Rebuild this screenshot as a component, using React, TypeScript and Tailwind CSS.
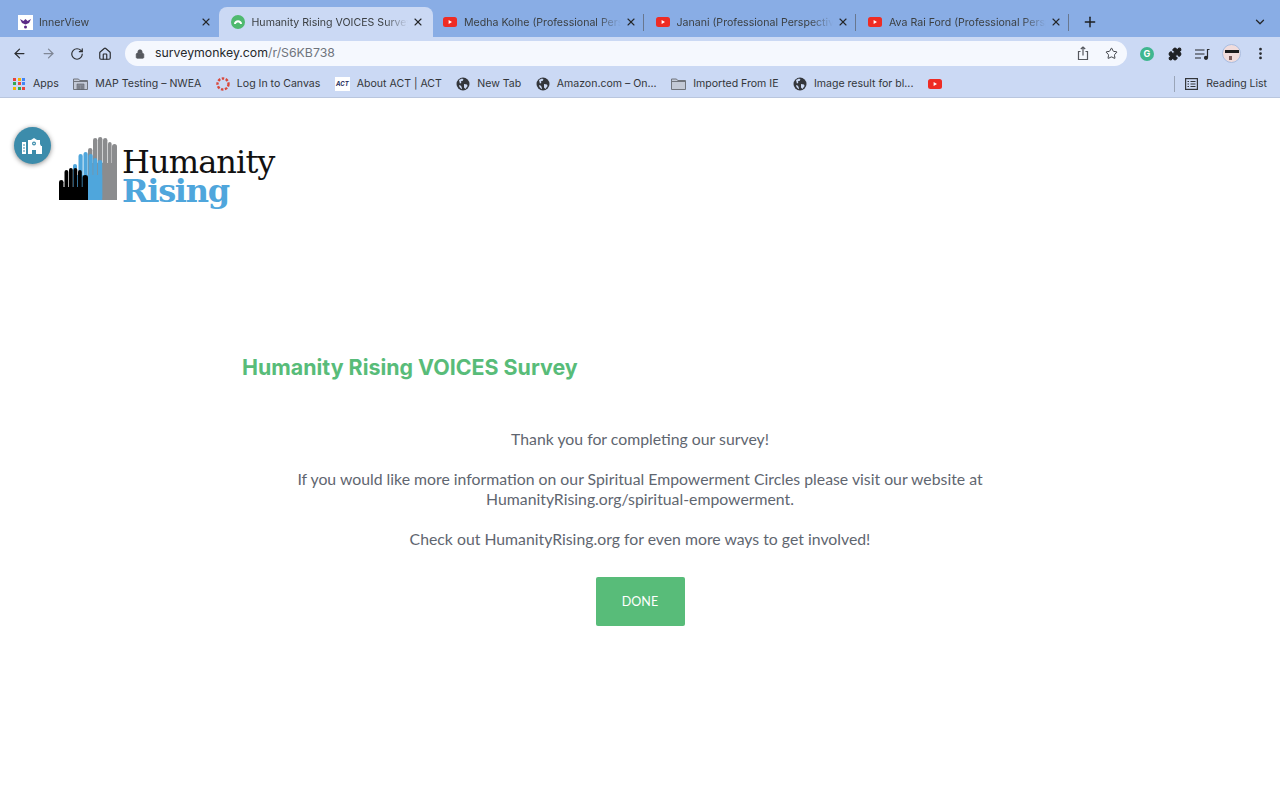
import { Plus, ChevronDown, ArrowLeft, ArrowRight, RotateCw, Home, Lock, Star, Puzzle, EllipsisVertical, X } from 'lucide-react';

const SANS = "font-['Inter','Liberation_Sans',sans-serif]";

function YouTube() {
  return (
    <svg width="14" height="10" viewBox="0 0 14 10" className="shrink-0">
      <rect width="14" height="10" rx="2.5" fill="#ee2c24" />
      <path d="M5.6 3v4l3.4-2z" fill="#fff" />
    </svg>
  );
}

function Globe() {
  return (
    <svg width="14" height="14" viewBox="0 0 14 14" className="shrink-0">
      <circle cx="7" cy="7" r="6.5" fill="#33363b" />
      <path d="M3 3l3-1.6 1.5 1-1 1.5-1.6.4.4 1.6-1.4.6zM8 7l3 .4.6 1.6-2.2 3L8 10.500zM3 8l2 .8 1 2.500-.4 1L3.500 10z" fill="#cbd9f4" />
    </svg>
  );
}

function Folder({ building }: { building?: boolean }) {
  return (
    <svg width="15" height="12" viewBox="0 0 15 12" className="shrink-0">
      <path d="M.5 1h5l1.200 1.500h7.800V11.500H.5z" fill="#c3c9d6" stroke="#70747c" />
      <path d="M.5 3.500h14" stroke="#70747c" />
      {building && <path d="M4 6h7v5.500H4zM6 7.500v4M9 7.500v4" fill="#8a8f99" stroke="#5c6068" strokeWidth=".6" />}
    </svg>
  );
}

function Tab({ icon, title, separator, active, afterActive }: { icon: React.ReactNode; title: string; separator?: boolean; active?: boolean; afterActive?: boolean }) {
  const size = active ? 'w-[214px] pl-[12px] pr-[8.500px] rounded-t-[8px] bg-[#cbd9f4]' : afterActive ? 'w-[211px] pl-[10.500px] pr-[7px]' : 'w-[212.500px] pl-[12px] pr-[7px]';
  return (
    <div className={`relative flex h-[30px] shrink-0 items-center ${size}`}>
      {icon}
      <span className="ml-[7px] min-w-0 flex-1 overflow-hidden whitespace-nowrap pt-[1px] text-[10.600px] leading-[14px] text-[#3c4043] [mask-image:linear-gradient(to_right,black_85%,transparent)]">
        {title}
      </span>
      <X size={12} strokeWidth={2.200} className="ml-[4px] shrink-0 text-[#25272a]" />
      {separator && <span className="absolute right-0 top-[7px] h-[17px] w-px bg-[#68778f]" />}
    </div>
  );
}

function Bookmark({ icon, label }: { icon: React.ReactNode; label: string }) {
  return (
    <div className="flex items-center gap-[7px] whitespace-nowrap text-[10.550px] text-[#33363a]">
      {icon}
      <span>{label}</span>
    </div>
  );
}

function AppsIcon() {
  const colors = ['#e8453c', '#f4b400', '#4285f4', '#34a853', '#e8453c', '#4285f4', '#f4b400', '#34a853', '#e8453c'];
  return (
    <div className="mr-[1px] grid grid-cols-3 gap-[1.500px]">
      {colors.map((c, i) => (
        <span key={i} className="h-[3px] w-[3px]" style={{ backgroundColor: c }} />
      ))}
    </div>
  );
}

const GREY_FINGERS = [[29, 11, 4.4], [34, 1, 4.4], [39, 0, 4.4], [44, 1, 4.4], [49, 5, 3.6], [53, 7, 5]];
const BLUE_FINGERS = [[14, 27, 4], [19.500, 17, 4.200], [24.500, 15, 4.200], [29.500, 17, 4.200], [34.200, 21, 4], [38.800, 23, 4.400]];
const BLACK_FINGERS = [[0, 43, 4.500], [5.500, 33, 3.800], [10, 31, 3.800], [14.500, 31, 3.800], [19, 33, 3.800], [23.500, 38, 5.500]];

function Hand({ fingers, x, palmTop, width, color }: { fingers: number[][]; x: number; palmTop: number; width: number; color: string }) {
  return (
    <g fill={color}>
      {fingers.map(([fx, fy, fw]) => (
        <rect key={fx} x={fx} y={fy} width={fw} height={63 - fy} rx={fw / 2} />
      ))}
      <rect x={x} y={palmTop} width={width} height={63 - palmTop} />
    </g>
  );
}

function HandsLogo() {
  return (
    <svg width="58" height="64" viewBox="0 0 58 64" className="shrink-0">
      <Hand fingers={GREY_FINGERS} x={29} palmTop={26} width={29} color="#8b8c8e" />
      <Hand fingers={BLUE_FINGERS} x={14} palmTop={38} width={29.200} color="#4fa6dc" />
      <Hand fingers={BLACK_FINGERS} x={0} palmTop={50} width={29} color="#000" />
    </svg>
  );
}

export default function App() {
  return (
    <div className={`flex h-[800px] w-[1280px] flex-col overflow-hidden bg-white ${SANS}`}>
      {/* tab strip */}
      <div className="flex h-[37px] items-end bg-[#89ade5] pl-[6px]">
        <Tab
          title="InnerView"
          icon={
            <svg width="15" height="15" viewBox="0 0 15 15" className="mr-[-1px] shrink-0">
              <rect width="15" height="15" fill="#fff" />
              <path d="M2 4l3.500 2L7.500 4l2 2L13 4l-2 4-3.500 1.500L4 8z" fill="#5b2a86" />
              <circle cx="7.500" cy="12" r="1.500" fill="#5b2a86" />
            </svg>
          }
        />
        <Tab
          active
          title="Humanity Rising VOICES Survey"
          icon={
            <svg width="14" height="14" viewBox="0 0 14 14" className="shrink-0">
              <circle cx="7" cy="7" r="7" fill="#4fb96f" />
              <path d="M3 9c0-5 8-5 8 0H9c0-2-4-2-4 0z" fill="#fff" />
            </svg>
          }
        />
        <Tab afterActive icon={<YouTube />} title="Medha Kolhe (Professional Perspective)" separator />
        <Tab icon={<YouTube />} title="Janani (Professional Perspective)" separator />
        <Tab icon={<YouTube />} title="Ava Rai Ford (Professional Perspective)" separator />
        <Plus size={16} strokeWidth={2.200} className="mb-[7px] ml-[13px] text-[#1d1f22]" />
        <ChevronDown size={14} strokeWidth={2.200} className="mb-[8px] ml-auto mr-[13px] text-[#25272a]" />
      </div>

      {/* toolbar */}
      <div className="flex h-[33px] items-center bg-[#cbd9f4]">
        <div className="ml-[12px] flex items-center gap-[14px]">
          <ArrowLeft size={15} className="text-[#2b2d30]" />
          <ArrowRight size={15} className="text-[#7f8796]" />
          <RotateCw size={14} className="text-[#2b2d30]" />
          <Home size={14} className="text-[#2b2d30]" />
        </div>
        <div className="ml-[13px] flex h-[25px] w-[1002px] items-center rounded-full bg-[#f5f8fe] pl-[10px] pr-[9px]">
          <Lock size={10} fill="#55585e" className="text-[#55585e]" />
          <span className="ml-[10px] text-[12.300px] text-[#26282b]">
            surveymonkey.com<span className="text-[#6f747c]">/r/S6KB738</span>
          </span>
          <svg width="14" height="15" viewBox="0 0 14 15" fill="none" stroke="#55585e" strokeWidth="1.200" className="ml-auto">
            <path d="M4.500 5.500H2.500v8h9v-8h-2M7 9.500V1M4.800 3L7 1l2.200 2" />
          </svg>
          <Star size={13} strokeWidth={1.800} className="ml-[15px] text-[#3b3e43]" />
        </div>
        <div className="ml-[13px] flex h-[14px] w-[14px] items-center justify-center rounded-full bg-[#3fb68f] text-[9px] font-bold leading-none text-white">G</div>
        <Puzzle size={14} fill="#1f2124" className="ml-[14px] text-[#1f2124]" />
        <svg width="15" height="12" viewBox="0 0 15 12" fill="none" stroke="#26282b" strokeWidth="1.200" className="ml-[13px]">
          <path d="M0 2h9.500M0 6h9.500M0 10h6" />
          <path d="M12.500 9.500V1.500h2" />
          <circle cx="11" cy="9.800" r="1.500" fill="#26282b" />
        </svg>
        <div className="relative ml-[12px] h-[19px] w-[19px] overflow-hidden rounded-full border border-[#a9bde0] bg-[#f0dcdc]">
          <span className="absolute left-[2px] top-[5px] h-[3px] w-[14px] bg-[#1c1c1c]" />
          <span className="absolute left-[6px] top-[11px] h-[4px] w-[3px] bg-[#7a5a5a]" />
        </div>
        <EllipsisVertical size={15} strokeWidth={2.400} className="ml-[12px] text-[#26282b]" />
      </div>

      {/* bookmarks bar */}
      <div className="flex h-[28px] items-center gap-[14.500px] border-b border-[#b9c6de] bg-[#cbd9f4] pl-[13px]">
        <Bookmark icon={<AppsIcon />} label="Apps" />
        <Bookmark icon={<Folder building />} label="MAP Testing – NWEA" />
        <Bookmark
          icon={
            <svg width="14" height="14" viewBox="0 0 14 14" className="shrink-0">
              <circle cx="7" cy="7" r="5.500" fill="none" stroke="#d8483c" strokeWidth="2.400" strokeDasharray="2.500 1.500" />
            </svg>
          }
          label="Log In to Canvas"
        />
        <Bookmark
          icon={<span className="flex h-[14px] w-[15px] items-center justify-center bg-white text-[6px] font-bold italic leading-none text-[#1c2a5a]">ACT</span>}
          label="About ACT | ACT"
        />
        <Bookmark icon={<Globe />} label="New Tab" />
        <Bookmark icon={<Globe />} label="Amazon.com – On..." />
        <Bookmark icon={<Folder />} label="Imported From IE" />
        <Bookmark icon={<Globe />} label="Image result for bl..." />
        <YouTube />
        <div className="ml-auto flex h-full items-center pr-[13px]">
          <span className="h-[16px] w-px bg-[#9aa5b8]" />
          <svg width="13" height="12" viewBox="0 0 13 12" fill="none" stroke="#33363a" strokeWidth="1.200" className="ml-[10px]">
            <rect x=".6" y=".6" width="11.800" height="10.800" />
            <path d="M2.500 3.500h1.500M5.500 3.500h5M2.500 6h1.500M5.500 6h5M2.500 8.500h1.500M5.500 8.500h5" />
          </svg>
          <span className="ml-[8px] whitespace-nowrap text-[10.500px] text-[#33363a]">Reading List</span>
        </div>
      </div>

      {/* page */}
      <main className="relative flex-1 bg-white">
        <button
          type="button"
          aria-label="Accessibility"
          className="absolute left-[14px] top-[29px] flex h-[37px] w-[37px] items-center justify-center rounded-full bg-[#3c8cab] shadow-[0_1px_5px_rgba(0,0,0,0.45)]"
        >
          <svg width="22" height="18" viewBox="0 0 22 18" fill="#fff">
            <path d="M6 7V3h3l3-2 3 2h3v4l1 2h1v8h-6v-4h-4v4H6z" />
            <circle cx="12" cy="6.500" r="2" fill="#3c8cab" />
            <circle cx="12" cy="6.500" r=".8" />
            <path d="M0 5h4v12H0z" />
            <path d="M1 8h2M1 11h2M1 14h2" stroke="#3c8cab" />
          </svg>
        </button>

        <header className="flex items-start pl-[59px] pt-[39px]">
          <HandsLogo />
          <div className="ml-[5px] mt-[12px] flex flex-col">
            <span className="font-['DejaVu_Serif',serif] text-[32px] leading-[27px] tracking-[-0.900px] text-[#111]">Humanity</span>
            <span className="font-['DejaVu_Serif',serif] text-[32px] font-bold leading-[30px] tracking-[-1.300px] text-[#4fa6dc]">Rising</span>
          </div>
        </header>

        <div className="mx-auto mt-[145px] w-[796px]">
          <h1 className="text-[21.400px] font-bold leading-[32px] text-[#58bc79]">Humanity Rising VOICES Survey</h1>
          <div className="mt-[46px] flex flex-col items-center text-center font-['Lato',sans-serif] text-[15.800px] leading-[20px] text-[#5f6670]">
            <p>Thank you for completing our survey!</p>
            <p className="mt-[20px]">
              If you would like more information on our Spiritual Empowerment Circles please visit our website at
              <br />
              HumanityRising.org/spiritual-empowerment.
            </p>
            <p className="mt-[20px]">Check out HumanityRising.org for even more ways to get involved!</p>
            <button
              type="button"
              className="mt-[28px] h-[49px] w-[89px] rounded-[2px] bg-[#58bc79] text-[12.500px] text-white"
            >
              DONE
            </button>
          </div>
        </div>
      </main>
    </div>
  );
}
